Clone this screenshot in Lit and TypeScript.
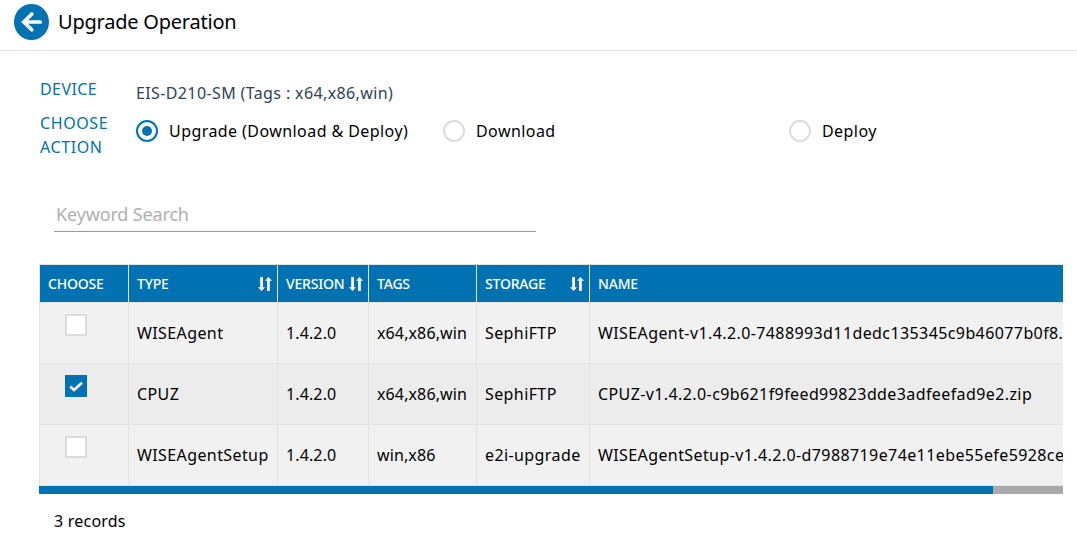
import { LitElement, html, css, svg } from "lit";
import { customElement, property, state } from "lit/decorators.js";

@customElement("sort-icon")
class SortIcon extends LitElement {
  static styles = css`
    :host { display: block; width: 14px; height: 14px; }
    svg { display: block; }
  `;
  render() {
    return html`<svg width="14" height="14" viewBox="0 0 14 14" fill="#fff">
      <path d="M2.2 0H5V10.2H6.9L3.6 14L0 10.2H2.2Z" />
      <path d="M9 14H11.8V3.8H14L10.4 0L7.1 3.8H9Z" />
    </svg>`;
  }
}

@customElement("radio-option")
class RadioOption extends LitElement {
  static styles = css`
    :host { display: flex; align-items: center; gap: 11px; height: 24px; white-space: nowrap; letter-spacing: 0.43px; }
    .ring {
      box-sizing: border-box; width: 22px; height: 22px; border-radius: 50%;
      border: 2px solid #dcdcdc; display: grid; place-items: center; background: #fff;
    }
    .ring.on { border-color: #0072b2; }
    .dot { width: 10px; height: 10px; border-radius: 50%; background: #0072b2; }
  `;
  @property({ type: Boolean }) checked = false;
  render() {
    return html`<span class="ring ${this.checked ? "on" : ""}">${this.checked ? html`<span class="dot"></span>` : ""}</span><slot></slot>`;
  }
}

@customElement("app-root")
class AppRoot extends LitElement {
  static styles = css`
    :host {
      display: block; width: 1077px; height: 535px; overflow: hidden; background: #fff; color: #000;
      font: 16px/24px "Noto Sans", "Open Sans", sans-serif;
    }
    header {
      display: flex; align-items: center; gap: 9px; height: 50px; box-sizing: border-box;
      padding: 0 0 6px 14px; box-shadow: 0 1px 0 #e3e3e3;
    }
    h1 { margin: 0; font-size: 20px; font-weight: 400; line-height: 28px; letter-spacing: -0.22px; }
    .back { display: block; }
    .form { display: grid; grid-template-columns: 96px 1fr; padding: 27px 0 0 40px; }
    .label { color: #0072b2; letter-spacing: 0.4px; }
    .device { color: #2f4256; padding-top: 4px; height: 30px; letter-spacing: 0.38px; }
    .actions { display: grid; grid-template-columns: 307px 346px 1fr; padding-top: 8px; }
    .choose { width: 80px; letter-spacing: 0.6px; }
    .search {
      margin: 36px 0 0 54px; width: 482px; height: 37px; box-sizing: border-box;
      border-bottom: 1px solid #999; padding: 6px 0 0 2px; color: #b0b0b0; font-size: 18px; line-height: 26px;
      letter-spacing: -0.15px;
    }
    .panel { margin: 32px 14px 0 39px; overflow: hidden; }
    .grid {
      display: grid; grid-template-columns: 89px 149px 91px 108px 113px 474px;
      border-top: 1px solid #e3e3e3; width: 1024px;
    }
    .th, .td { box-sizing: border-box; border-left: 1px solid #e3e3e3; border-bottom: 1px solid #e3e3e3; padding-left: 8px; display: flex; align-items: center; white-space: nowrap; }
    .th { height: 38px; background: #0072b2; color: #fff; font-size: 14px; font-weight: 500; justify-content: space-between; padding-right: 5px; letter-spacing: -0.2px; }
    .td { height: 61px; background: #f1f1f1; letter-spacing: 0.4px; }
    .td.c1, .td.c2 { letter-spacing: 0.12px; }
    .td.alt { background: #ececec; }
    .td.pick { align-items: flex-start; padding: 11px 0 0 25px; }
    .box { box-sizing: border-box; width: 22px; height: 22px; border: 2px solid #dcdcdc; background: #fff; }
    .box.on { border: 0; background: #0072b2; }
    .box svg { display: block; }
    .bar { height: 8px; background: #a9a9a9; }
    .thumb { width: 954px; height: 8px; background: #0072b2; }
    .count { padding: 15px 0 0 54px; letter-spacing: 0.22px; }
  `;
  @state() selected = 1;
  heads: [string, boolean][] = [["CHOOSE", false], ["TYPE", true], ["VERSION", true], ["TAGS", false], ["STORAGE", true], ["NAME", false]];
  rows = [
    ["WISEAgent", "1.4.2.0", "x64,x86,win", "SephiFTP", "WISEAgent-v1.4.2.0-7488993d11dedc135345c9b46077b0f8.zip"],
    ["CPUZ", "1.4.2.0", "x64,x86,win", "SephiFTP", "CPUZ-v1.4.2.0-c9b621f9feed99823dde3adfeefad9e2.zip"],
    ["WISEAgentSetup", "1.4.2.0", "win,x86", "e2i-upgrade", "WISEAgentSetup-v1.4.2.0-d7988719e74e11ebe55efe5928ce"],
  ];
  render() {
    return html`
      <header>
        <svg class="back" width="35" height="36" viewBox="0 0 35 36">
          <ellipse cx="17.5" cy="18" rx="17.5" ry="18" fill="#0072b2" />
          <path d="M26.3 18H10.5M17.8 10L9.8 18L17.8 25.8" fill="none" stroke="#fff" stroke-width="3.7" stroke-linecap="round" stroke-linejoin="miter" />
        </svg>
        <h1>Upgrade Operation</h1>
      </header>
      <div class="form">
        <div class="label">DEVICE</div>
        <div class="device">EIS-D210-SM (Tags : x64,x86,win)</div>
        <div class="label choose">CHOOSE ACTION</div>
        <div class="actions">
          <radio-option checked>Upgrade (Download &amp; Deploy)</radio-option>
          <radio-option>Download</radio-option>
          <radio-option>Deploy</radio-option>
        </div>
      </div>
      <div class="search">Keyword Search</div>
      <div class="panel">
        <div class="grid">
          ${this.heads.map(([t, s]) => html`<div class="th"><span>${t}</span>${s ? html`<sort-icon></sort-icon>` : ""}</div>`)}
          ${this.rows.map((r, i) => html`
            <div class="td pick ${i % 2 ? "alt" : ""}"><span class="box ${i === this.selected ? "on" : ""}">${i === this.selected
              ? html`<svg width="22" height="22" viewBox="0 0 22 22">${svg`<path d="M5.2 11.5L9 15L17 7.8" fill="none" stroke="#fff" stroke-width="2.7"/>`}</svg>` : ""}</span></div>
            ${r.map((c, j) => html`<div class="td c${j} ${i % 2 ? "alt" : ""}"><span>${c}</span></div>`)}
          `)}
        </div>
        <div class="bar"><div class="thumb"></div></div>
      </div>
      <div class="count">3 records</div>
    `;
  }
}
